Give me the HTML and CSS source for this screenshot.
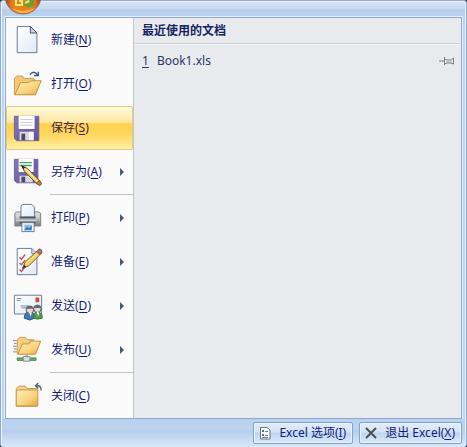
FILE: index.html
```html
<!DOCTYPE html>
<html lang="zh-CN">
<head>
<meta charset="utf-8">
<title>Excel</title>
<link rel="stylesheet" href="styles.css">
</head>
<body>
<div class="window">
  <svg class="orb" width="38" height="16" viewBox="0 0 38 16" aria-hidden="true">
    <defs>
      <radialGradient id="orb" cx="19" cy="5" r="16" gradientUnits="userSpaceOnUse">
        <stop offset="0" stop-color="#e8781c"/><stop offset=".5" stop-color="#ee8420"/><stop offset=".8" stop-color="#df7420"/><stop offset="1" stop-color="#a8572c"/>
      </radialGradient>
    </defs>
    <circle cx="19" cy="-4" r="18" fill="url(#orb)" stroke="#9c6a54"/>
    <path d="M8 8Q18 14 31 8Q27 13 19 13Q12 13 8 8Z" fill="#ffc04d" opacity=".8"/>
    <path d="M12 0V5H18V1H15" fill="none" stroke="#ffe873" stroke-width="2"/>
    <path d="M21 1Q23 8 28 4V0" fill="none" stroke="#62a332" stroke-width="4"/>
    <path d="M21 3L25 1" stroke="#d8ee80" stroke-width="2"/>
  </svg>
  <main class="panel">
    <nav class="menu">
      <button class="item"><svg class="icon" viewBox="0 0 32 32"><defs><linearGradient id="page" x2="1" y2="1"><stop stop-color="#fff"/><stop offset="1" stop-color="#dfeaf8"/></linearGradient></defs><path d="M4.500 1.500H18.500L25.500 8.500V29.500H4.500Z" fill="url(#page)" stroke="#65738d"/><path d="M18.500 1.500V8.500H25.500Z" fill="#c9d8ec" stroke="#3c4b68"/></svg><span class="label">新建(<u>N</u>)</span></button>
      <button class="item"><svg class="icon" viewBox="0 0 32 32"><defs><linearGradient id="fold" x2="1" y2="1"><stop stop-color="#fff0bd"/><stop offset=".6" stop-color="#f9d37b"/><stop offset="1" stop-color="#dfa741"/></linearGradient></defs><path d="M1.500 27V10L4 7.500H10L12 10H22L23.500 12V27Z" fill="#f2c778" stroke="#c99a4a"/><path d="M2 27.500L8 14.500H17L19 12.500H30L24 27.500Z" fill="url(#fold)" stroke="#c58e3d"/><path d="M18 6Q22 1 26 6M22.500 7H27V3" fill="none" stroke="#405b82" stroke-width="1.500"/></svg><span class="label">打开(<u>O</u>)</span></button>
      <button class="item active"><svg class="icon" viewBox="0 0 32 32"><defs><linearGradient id="disk" x2="1" y2="1"><stop stop-color="#8878b9"/><stop offset="1" stop-color="#5f5299"/></linearGradient></defs><path d="M1.500 3.500H27.500V29.500H4L1.500 27Z" fill="url(#disk)" stroke="#6a5f9b"/><path d="M6 3H23V17H6Z" fill="#fff"/><path d="M8 7H21M8 10H21M8 13H21" stroke="#c9c9d2"/><path d="M7 20H22V29H7Z" fill="#d7d9df"/><path d="M9 22H13V29H9Z" fill="#4d4768"/><path d="M17 20H22V29H17Z" fill="#f7f7f8"/></svg><span class="label">保存(<u>S</u>)</span></button>
      <button class="item more"><svg class="icon" viewBox="0 0 32 32"><path d="M1.500 2.500H26.500V27.500H4L1.500 25Z" fill="url(#disk)" stroke="#6a5f9b"/><path d="M6 2H22V16H6Z" fill="#fff"/><path d="M7 6H20M7 9H20" stroke="#42a660" stroke-width="1.500"/><path d="M7 20H21V27H7Z" fill="#d7d9df"/><path d="M9 21H13V27H9Z" fill="#4d4768"/><path d="M9 9L15 12L29 26L26 29L12 15Z" fill="#f5d274" stroke="#5c4627"/><path d="M9 9L13 11L11 13Z" fill="#252525"/><path d="M14 13L26 26" stroke="#fff0a5"/><path d="M25 28L28 25L30.500 28Q30 31 27.500 30Z" fill="#be8052" stroke="#704931"/></svg><span class="label">另存为(<u>A</u>)</span></button>
      <hr class="rule">
      <button class="item more"><svg class="icon" viewBox="0 0 32 32"><defs><linearGradient id="print" x2="0" y2="1"><stop stop-color="#e4e6e8"/><stop offset=".5" stop-color="#b5b8bc"/><stop offset="1" stop-color="#75797f"/></linearGradient></defs><path d="M2 11L4 9.500H27L29.500 11V24.500H2Z" fill="url(#print)" stroke="#777b82"/><path d="M8.500 15V3L10.500 1.500H20L23 4.500V15Z" fill="url(#page)" stroke="#6b7484"/><path d="M4 12H7V16H4ZM25 12H28V16H25Z" fill="#d3d6d9"/><path d="M7 15.500H24" stroke="#54585f" stroke-width="2"/><path d="M3 18.500H29" stroke="#d9dbdd"/><path d="M7 21H24" stroke="#51565d" stroke-width="2"/><path d="M25 19H28" stroke="#65ad57"/><path d="M9.500 21V30.500H22.500V21Z" fill="#fff" stroke="#61738e"/><path d="M12 23H20V29H12Z" fill="#8dbee9"/><path d="M12 29L15 25L17 27L20 24V29Z" fill="#397eb8"/></svg><span class="label">打印(<u>P</u>)</span></button>
      <button class="item more"><svg class="icon" viewBox="0 0 32 32"><path d="M4.500 1.500H20L25.500 7V29.500H4.500Z" fill="url(#page)" stroke="#65738d"/><path d="M20 2V7H25" fill="#d1dced" stroke="#7486a1"/><path d="M7 11L9 13L13 8M7 17L9 19L13 14M7 24L9 26L13 21" fill="none" stroke="#c84e60" stroke-width="1.500"/><path d="M10 23L13 16L26 4L30 7L17 20Z" fill="#f5cf65" stroke="#76582c"/><path d="M13 18L27 6" stroke="#fff1a2"/><path d="M10 23L12 19L14 21Z" fill="#302e2d"/><path d="M25 5L28 2Q31 2 31 6L28 8Z" fill="#b97266" stroke="#7b5550"/></svg><span class="label">准备(<u>E</u>)</span></button>
      <button class="item more"><svg class="icon" viewBox="0 0 32 32"><path d="M1.500 4.500H30.500V24.500H1.500Z" fill="url(#page)" stroke="#687991"/><path d="M4 8H9M4 10H8M8 16H17M9 18H15" stroke="#7089aa"/><path d="M24 7H28V12H24Z" fill="#d74534"/><path d="M12 29Q12 22 18 22Q23 23 23 29L18 31Z" fill="#4276bf" stroke="#274c88"/><path d="M22 29Q21 22 27 22Q32 24 31 29L26 30Z" fill="#4aa249" stroke="#2e7137"/><circle cx="18" cy="20" r="4" fill="#e3d8cd" stroke="#4c4c55"/><circle cx="26" cy="19" r="4" fill="#e3d8cd" stroke="#4c4c55"/><path d="M14 19Q18 13 22 19ZM22 18Q26 12 30 18Z" fill="#656871"/><path d="M17 23L19 27L20 23M25 22L27 27L28 23" fill="#fff"/></svg><span class="label">发送(<u>D</u>)</span></button>
      <button class="item more"><svg class="icon" viewBox="0 0 32 32"><path d="M0 6H4M1 9H4M0 12H4M1 15H4M0 18H4" stroke="#71819a"/><path d="M4.500 20V5L7 2.500H13L15 5H22V20Z" fill="#f5ce82" stroke="#c99a4a"/><path d="M5 20.500L10 9.500H17L19 6.500H29.500L24 20.500Z" fill="url(#fold)" stroke="#c58e3d"/><path d="M13 21H16V26H13Z" fill="#b5bac0"/><path d="M4.500 24.500H24.500V27H4.500Z" fill="#68b868" stroke="#3b8445"/><path d="M11 23H18V28H11Z" fill="#d9dce0" stroke="#858a92"/></svg><span class="label">发布(<u>U</u>)</span></button>
      <hr class="rule">
      <button class="item"><svg class="icon" viewBox="0 0 32 32"><path d="M3.500 27V8L6 5.500H13L15 8H25.500V27Z" fill="#f4ce83" stroke="#c5964b"/><path d="M3.500 10.500L6 9.500H26.500V26.500H3.500Z" fill="url(#fold)" stroke="#c5964b"/><path d="M30 10Q30 4 24 5M27 2L24 5L27 8" fill="none" stroke="#54647e" stroke-width="1.500"/></svg><span class="label">关闭(<u>C</u>)</span></button>
    </nav>
    <section class="recent">
      <h1 class="title">最近使用的文档</h1>
      <div class="file">
        <a class="link" href="#"><u>1</u><span>Book1.xls</span></a>
        <button class="pin" aria-label="固定"><svg width="16" height="10" viewBox="0 0 16 10"><path d="M0 5H5M5.500 1V9M5.500 3L8 4H12L14.500 2V8L12 7H8L5.500 8" fill="none" stroke="#7d7e81"/><path d="M7 6H13" stroke="#a4a5a8"/></svg></button>
      </div>
    </section>
  </main>
  <footer class="footer">
    <button class="action"><svg width="12" height="14" viewBox="0 0 12 14"><path d="M1.500 1.500H8L11 4V13H1.500Z" fill="#fff" stroke="#697381"/><path d="M3 4H5V6H3ZM3 8H5V10H3Z" fill="#566d8f"/><path d="M6 5.500H9M6 9.500H9M3 11.500H9" stroke="#717985"/></svg><span>Excel 选项(<u>I</u>)</span></button>
    <button class="action"><svg width="12" height="14" viewBox="0 0 12 14"><path d="M1 2L11 12M11 2L1 12" stroke="#505050" stroke-width="2"/></svg><span>退出 Excel(<u>X</u>)</span></button>
  </footer>
</div>
</body>
</html>
```
FILE: styles.css
```css
* {
  box-sizing: border-box;
}

body {
  margin: 0;
  background: #182030;
  color: #141c78;
  font: 12px/20px "Noto Sans", "Noto Sans CJK SC", sans-serif;
}

button {
  margin: 0;
  padding: 0;
  border: 0;
  background: none;
  color: inherit;
  font: inherit;
}

u {
  text-underline-offset: 2px;
}

.window {
  position: relative;
  display: flex;
  flex-direction: column;
  min-height: 100vh;
  padding: 16px 4px 0;
  border: 1px solid #92aacd;
  border-bottom: 0;
  border-radius: 3px;
  background: linear-gradient(#d8e5f5, #c6d9f0 8px, #b5cdeb 9px, #bdd3ee 16px, #bfd6f1 100%);
  box-shadow: inset 1px 1px #e9f2fc, inset -1px 0 #e9f2fc;
}

.orb {
  position: absolute;
  top: -1px;
  left: 3px;
}

.panel {
  display: flex;
  flex: 1;
  border: 1px solid #8ba9d1;
  outline: 1px solid #e5effa;
}

.menu {
  width: 128px;
  border-right: 1px solid #c3c6ca;
  background: #fafafa;
}

.item {
  display: flex;
  align-items: center;
  width: 100%;
  height: 44px;
  padding: 0 8px 0 6px;
  border: 1px solid transparent;
  text-align: left;
}

.icon {
  width: 30px;
  height: 30px;
  margin-right: 8px;
}

.label {
  flex: 1;
  font-size: 12px;
  white-space: nowrap;
}

.active {
  border-color: #e2ca83;
  border-radius: 2px;
  background: linear-gradient(#fffbdc, #ffe9a2 36%, #ffd350 40%, #ffd65a 65%, #fff0a6);
  color: #3b2450;
}

.more::after {
  border: 4px solid transparent;
  border-right: 0;
  border-left-color: #44597f;
  content: "";
}

.rule {
  height: 2px;
  margin: 0 0 0 44px;
  border: 0;
  border-top: 1px solid #bfc3c8;
}

.recent {
  flex: 1;
  background: #e9eaee;
}

.title {
  margin: 0 1px;
  padding: 3px 7px 2px;
  border-bottom: 1px solid #c9cdd5;
  box-shadow: 0 1px #f6f7f9;
  color: #142564;
  font-size: 12px;
  font-weight: 700;
}

.file {
  display: flex;
  align-items: center;
  justify-content: space-between;
  padding: 7px 6px 0 8px;
}

.link {
  display: flex;
  gap: 8px;
  color: #27376c;
  text-decoration: none;
}

.pin {
  display: flex;
}

.footer {
  display: flex;
  align-items: center;
  justify-content: flex-end;
  gap: 6px;
  height: 28px;
  margin: 0 -3px;
  padding: 0 3px 0 0;
  background: linear-gradient(#b9d1ed, #bdd4ef 10px, #b3cdeb 11px, #d8e8fa);
}

.action {
  display: flex;
  align-items: center;
  gap: 8px;
  height: 22px;
  padding: 0 6px 0 5px;
  border: 1px solid #83a3cf;
  border-radius: 2px;
  background: linear-gradient(#e2edfa, #d3e3f6 9px, #bdd5f0 10px, #dceafb);
  box-shadow: inset 0 0 0 1px #e8f2fd;
  white-space: nowrap;
}
```
